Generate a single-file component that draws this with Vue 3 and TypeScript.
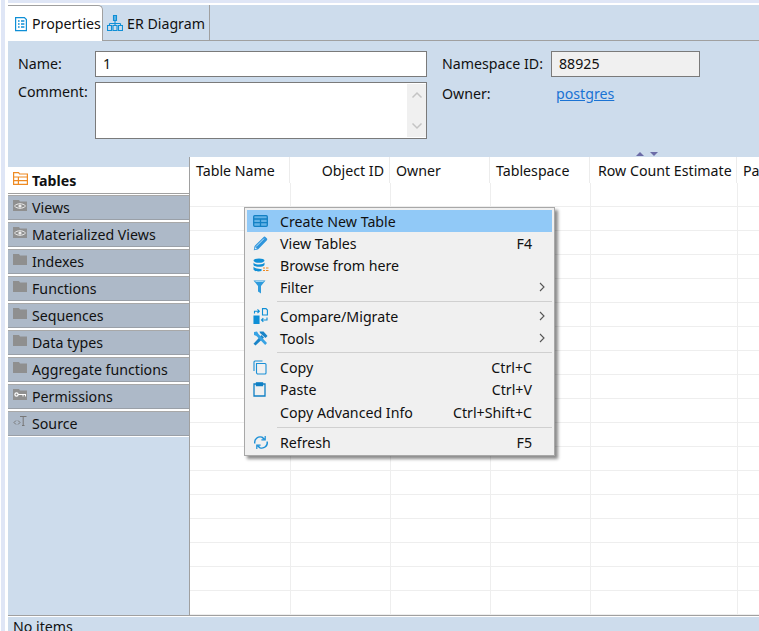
<script setup lang="ts">
interface MenuEntry { label?: string; icon?: string; key?: string; sub?: boolean; active?: boolean; sep?: boolean; spaced?: boolean }
const sideTabs = [
  { label: 'Views', icon: 'eye' },
  { label: 'Materialized Views', icon: 'eye' },
  { label: 'Indexes', icon: 'folder' },
  { label: 'Functions', icon: 'folder' },
  { label: 'Sequences', icon: 'folder' },
  { label: 'Data types', icon: 'folder' },
  { label: 'Aggregate functions', icon: 'folder' },
  { label: 'Permissions', icon: 'key' },
  { label: 'Source', icon: 'source' },
]
const columns = [
  { label: 'Table Name', w: 100 },
  { label: 'Object ID', w: 100, right: true },
  { label: 'Owner', w: 100 },
  { label: 'Tablespace', w: 100 },
  { label: 'Row Count Estimate', w: 147, wide: true },
  { label: 'Pa', w: 60 },
]
const rows = Array.from({ length: 18 }, (_, i) => i)
const menu: MenuEntry[] = [
  { label: 'Create New Table', icon: 'table', active: true },
  { label: 'View Tables', icon: 'pencil', key: 'F4' },
  { label: 'Browse from here', icon: 'db' },
  { label: 'Filter', icon: 'filter', sub: true },
  { sep: true },
  { label: 'Compare/Migrate', icon: 'compare', sub: true },
  { label: 'Tools', icon: 'tools', sub: true },
  { sep: true },
  { label: 'Copy', icon: 'copy', key: 'Ctrl+C' },
  { label: 'Paste', icon: 'paste', key: 'Ctrl+V' },
  { label: 'Copy Advanced Info', key: 'Ctrl+Shift+C', spaced: true },
  { sep: true, spaced: true },
  { label: 'Refresh', icon: 'refresh', key: 'F5' },
]
</script>

<template>
  <div class="app">
    <div class="strip"></div>
    <div class="shell">
      <div class="tabbar">
        <div class="tab active">
          <svg class="tab-icon" width="16" height="16" viewBox="0 0 16 16" fill="none" stroke="#0f8fd6" stroke-width="1.2">
            <path d="M2.6 1.6h8.8l2 2v11H2.6z" />
            <path d="M5 5h1.6M8 5h3.4M5 8h1.6M8 8h3.4M5 11h1.6M8 11h3.4" stroke-width="1.4" />
          </svg>
          <span>Properties</span>
        </div>
        <div class="tab">
          <svg class="tab-icon" width="16" height="16" viewBox="0 0 16 16" fill="none" stroke="#0f8fd6" stroke-width="1.1">
            <path d="M6.5.5h3v5h-3z" fill="#5db4e6" />
            <path d="M8 5.5v3M2.5 8.5h11M2.5 8.5v2M8 8.5v2M13.5 8.5v2" />
            <path d="M.5 10.5h4v5h-4zM6 10.5h4v5H6zM11.5 10.5h4v5h-4z" />
          </svg>
          <span>ER Diagram</span>
        </div>
      </div>

      <div class="form">
        <div class="form-left">
          <label class="lbl">Name:</label>
          <div class="input">1</div>
          <label class="lbl comment-lbl">Comment:</label>
          <div class="textarea">
            <div class="scrollbar">
              <svg width="12" height="8" viewBox="0 0 12 8" fill="none" stroke="#c4c4c4" stroke-width="1.5"><path d="M1.5 6.5 6 2l4.5 4.5" /></svg>
              <svg width="12" height="8" viewBox="0 0 12 8" fill="none" stroke="#c4c4c4" stroke-width="1.5"><path d="M1.5 1.5 6 6l4.5-4.5" /></svg>
            </div>
          </div>
        </div>
        <div class="form-right">
          <label class="lbl">Namespace ID:</label>
          <div class="input readonly">88925</div>
          <label class="lbl">Owner:</label>
          <a class="link">postgres</a>
        </div>
      </div>
      <div class="sash">
        <svg width="22" height="5" viewBox="0 0 22 5" fill="#6b6ba6"><path d="M0 5 4 1l4 4zM14 1h8l-4 4z" /></svg>
      </div>

      <div class="main">
        <div class="side">
          <div class="side-tab current">
            <svg width="15" height="13" viewBox="0 0 15 13" fill="none" stroke="#ee8a22" stroke-width="1.2">
              <path d="M.6.6h5l1 1.4h7.8v10.4H.6zM.6 5h13.8M.6 8.6h13.8M5.4 5v7.4" />
            </svg>
            <span>Tables</span>
          </div>
          <div v-for="t in sideTabs" :key="t.label" class="side-tab">
            <svg v-if="t.icon === 'folder'" width="14" height="11" viewBox="0 0 14 11" fill="#8f8f8f"><path d="M0 0h6l1 1.5h7V11H0z" /></svg>
            <svg v-else-if="t.icon === 'eye'" width="14" height="11" viewBox="0 0 14 11">
              <path d="M0 0h6l1 1.5h7V11H0z" fill="#8f8f8f" />
              <path d="M1.5 6C4 3 10 3 12.5 6 10 9 4 9 1.5 6z" fill="none" stroke="#eee" />
              <circle cx="7" cy="6" r="1.6" fill="#eee" />
            </svg>
            <svg v-else-if="t.icon === 'key'" width="14" height="11" viewBox="0 0 14 11">
              <path d="M0 0h6l1 1.5h7V11H0z" fill="#8f8f8f" />
              <circle cx="3.5" cy="5.5" r="1.6" fill="none" stroke="#fff" stroke-width="1.2" />
              <path d="M5 5.5h8M10 5.5v2M12.5 5.5v2" stroke="#fff" fill="none" />
            </svg>
            <svg v-else width="14" height="11" viewBox="0 0 14 11" fill="none" stroke="#777">
              <path d="M3 4.5 1 6.5l2 2M5 4.5l2 2-2 2M7 .5h6.5M10.2.5v9M9 9.5h2.5" />
            </svg>
            <span>{{ t.label }}</span>
          </div>
        </div>

        <div class="table">
          <div class="thead">
            <div v-for="c in columns" :key="c.label" class="th" :class="{ right: c.right, wide: c.wide }" :style="{ width: c.w + 'px' }">{{ c.label }}</div>
          </div>
          <div v-for="r in rows" :key="r" class="tr">
            <div v-for="c in columns" :key="c.label" class="td" :style="{ width: c.w + 'px' }"></div>
          </div>
        </div>
      </div>

      <div class="status">No items</div>
    </div>

    <div class="menu">
      <template v-for="(m, i) in menu" :key="i">
        <div v-if="m.sep" class="sep" :class="{ spaced: m.spaced }"></div>
        <div v-else class="item" :class="{ hot: m.active, spaced: m.spaced }">
          <span class="mi">
            <svg v-if="m.icon === 'table'" width="15" height="12" viewBox="0 0 15 12" fill="none" stroke="#1380c4" stroke-width="1.3"><rect x=".7" y=".7" width="13.6" height="10.6" rx="1" fill="#63b2e6" /><path d="M.7 4h13.6M.7 7.6h13.6M7.5 4v7.3" /></svg>
            <svg v-else-if="m.icon === 'pencil'" width="15" height="15" viewBox="0 0 15 15"><path d="M.8 14.2l1-4.4 8.6-8.6a1.6 1.6 0 0 1 2.3 0l1 1a1.6 1.6 0 0 1 0 2.3L5.2 13.2z" fill="#2f95dc" /><path d="M3 10.6 11 2.6" stroke="#bfe2f8" /><path d="M1.4 13.6l.7-3 2.3 2.3z" fill="#fff" stroke="#2f95dc" stroke-width=".7" /></svg>
            <svg v-else-if="m.icon === 'db'" width="16" height="15" viewBox="0 0 16 15"><ellipse cx="6" cy="2.6" rx="5.5" ry="2.2" fill="#0f8fd6" /><path d="M.5 4.5c1 2.6 10 2.6 11 0v2.4c-1 2.6-10 2.6-11 0zM.5 8.6c1 2.6 8 2.6 8 2.2V13c-3 .8-7 .4-8-1.4z" fill="#0f8fd6" /><path d="M10 10h2M13 10h2.5M10 12.5h2M13 12.5h2.5" stroke="#ee8a22" stroke-width="1.2" /></svg>
            <svg v-else-if="m.icon === 'filter'" width="13" height="14" viewBox="0 0 13 14"><path d="M.5.5h12L8 6v7.5L5 11.5V6z" fill="#2f9bdc" /><path d="M2.5 1.5h8" stroke="#9ed4f2" /></svg>
            <svg v-else-if="m.icon === 'compare'" width="15" height="16" viewBox="0 0 15 16" fill="none" stroke="#0f8fd6" stroke-width="1.1"><path d="M9.5.6h3.5l1.4 1.4v5H9.5z" /><path d="M1.5 5.5V3.2h4.5M4.5 1.4 6.3 3.2 4.5 5M14 9.5v2.5H8.5M10.3 10.2 8.5 12l1.8 1.8" /><path d="M1 8h5v7.4H1z" fill="#0f8fd6" /></svg>
            <svg v-else-if="m.icon === 'tools'" width="15" height="15" viewBox="0 0 15 15"><path d="M.5 12.7 8.5 4 11 6.4l-8.5 8.2z" fill="#1a84c8" /><path d="M6.5.5h4l4 4.5-2 2-5.5-5z" fill="#1a84c8" /><path d="M1 1l3-.5 1.5 2.5 8.5 9-1.8 2L3.4 5 1 4z" fill="#38a3e4" /></svg>
            <svg v-else-if="m.icon === 'copy'" width="14" height="15" viewBox="0 0 14 15" fill="none" stroke="#1a8fd6" stroke-width="1.1"><path d="M3.5 3.5H12a1 1 0 0 1 1 1V13a1 1 0 0 1-1 1H5a1.5 1.5 0 0 1-1.5-1.5z" /><path d="M1 11V2a1 1 0 0 1 1-1h7.5" /></svg>
            <svg v-else-if="m.icon === 'paste'" width="13" height="15" viewBox="0 0 13 15" fill="none" stroke="#0f7fc4" stroke-width="1.3"><path d="M3 2H1v12h11V2h-2" /><path d="M3.5 .8h6V3.5h-6z" fill="#0f7fc4" /></svg>
            <svg v-else-if="m.icon === 'refresh'" width="16" height="15" viewBox="0 0 16 15" fill="none" stroke="#1a8fd6" stroke-width="1.4"><path d="M1.8 8.5C1 4 5 1 9 2.2l2.6 2.2" /><path d="M12.2 1v3.8H8.4" stroke-width="1.2" /><path d="M14.2 6.5C15 11 11 14 7 12.8l-2.6-2.2" /><path d="M3.8 14v-3.8h3.8" stroke-width="1.2" /></svg>
          </span>
          <span class="ml">{{ m.label }}</span>
          <span class="mk">{{ m.key }}</span>
          <span class="ma">
            <svg v-if="m.sub" width="7" height="10" viewBox="0 0 7 10" fill="none" stroke="#555" stroke-width="1.1"><path d="M1 1l4 4-4 4" /></svg>
          </span>
        </div>
      </template>
    </div>
  </div>
</template>

<style>
html, body { margin: 0; background: #fff; }
</style>

<style scoped>
.app {
  position: relative;
  display: flex;
  width: 759px;
  height: 631px;
  overflow: hidden;
  background: #fff;
  font-family: "Noto Sans", "Liberation Sans", sans-serif;
  font-size: 14.2px;
  color: #111;
}
.strip {
  flex: none;
  width: 4px;
  margin: 0 3px 0 1px;
  background: #dfe6f6;
}
.shell {
  flex: 1;
  display: flex;
  flex-direction: column;
  border-top: 3px solid #dfe6f6;
  padding-top: 2px;
  min-width: 0;
}
.tabbar {
  flex: none;
  display: flex;
  height: 35px;
  background: #cddcec;
  border-bottom: 1px solid #a0a0a0;
  box-sizing: content-box;
}
.tab {
  display: flex;
  align-items: center;
  gap: 4px;
  height: 35px;
  padding: 0 0 0 4px;
  width: 107px;
  box-sizing: border-box;
  border-right: 1px solid #a0a0a0;
  white-space: nowrap;
}
.tab span { padding-top: 2px; }
.tab.active {
  width: 95px;
  padding-left: 5px;
  gap: 3px;
  height: 36px;
  background: #fff;
  border-top: 1px solid #a0a0a0;
  border-top-right-radius: 5px;
}
.tab.active span { padding-top: 0; }
.tab-icon { flex: none; }
.form {
  flex: none;
  display: flex;
  height: 106px;
  padding: 10px 0 0 10px;
  box-sizing: border-box;
  background: #cddcec;
}
.form-left {
  display: grid;
  grid-template-columns: 77px 332px;
  grid-template-rows: 26px 57px;
  row-gap: 5px;
  width: 424px;
}
.form-right {
  display: grid;
  grid-template-columns: 109px 149px;
  grid-template-rows: 26px 33px;
  align-items: center;
}
.lbl { line-height: 26px; white-space: nowrap; }
.comment-lbl { align-self: start; line-height: 20px; }
.input {
  box-sizing: border-box;
  height: 26px;
  line-height: 24px;
  padding-left: 7px;
  background: #fff;
  border: 1px solid #7a7a7a;
}
.readonly { background: #f0f0f0; }
.textarea {
  position: relative;
  box-sizing: border-box;
  height: 57px;
  background: #fff;
  border: 1px solid #7a7a7a;
}
.scrollbar {
  position: absolute;
  top: 1px;
  right: 0;
  bottom: 1px;
  width: 19px;
  background: #f0f0f0;
  display: flex;
  flex-direction: column;
  align-items: center;
  justify-content: space-between;
  padding: 7px 0;
  box-sizing: border-box;
}
.link {
  color: #1a73d4;
  text-decoration: underline;
  padding-left: 5px;
}
.sash {
  flex: none;
  height: 10px;
  line-height: 0;
  background: #cddcec;
  padding-left: 628px;
  box-sizing: border-box;
}
.sash svg { margin-top: 4px; display: block; }
.main {
  flex: 1;
  display: flex;
  min-height: 0;
}
.side {
  flex: none;
  width: 182px;
  box-sizing: border-box;
  padding-top: 10px;
  background: #cddcec;
  border-right: 1px solid #a0a0a0;
}
.side-tab {
  display: flex;
  height: 25px;
  margin-bottom: 2px;
  box-sizing: border-box;
  padding: 2px 0 0 5px;
  gap: 5px;
  background: #adb9c8;
  border-top: 1px solid #a8a8a8;
  border-bottom: 1px solid #9aa0a8;
  box-shadow: 0 1px 0 #fff, 0 -1px 0 #fff;
  line-height: 20px;
  white-space: nowrap;
}
.side-tab svg { flex: none; margin-top: 2px; }
.side-tab.current {
  height: 27px;
  margin-bottom: 1px;
  background: #fff;
  border: 0;
  border-bottom: 1px solid #a0a0a0;
  box-shadow: none;
  font-weight: 700;
  padding-top: 4px;
  gap: 4px;
}
.side-tab.current svg { margin-top: 1px; }
.table {
  flex: 1;
  background: #fff;
  overflow: hidden;
}
.thead {
  display: flex;
  height: 26px;
}
.th {
  flex: none;
  box-sizing: border-box;
  padding: 4px 5px 0 6px;
  border-right: 1px solid #ececec;
  line-height: 20px;
  white-space: nowrap;
  overflow: hidden;
}
.th.right { text-align: right; }
.th.wide { padding-left: 8px; }
.tr {
  display: flex;
  height: 24px;
  box-sizing: border-box;
  padding-left: 1px;
  border-bottom: 1px solid #eeeeee;
}
.td {
  flex: none;
  box-sizing: border-box;
  border-right: 1px solid #eeeeee;
}
.status {
  flex: none;
  height: 16px;
  box-sizing: border-box;
  border-top: 1px solid #a0a0a0;
  box-shadow: inset 0 1px 0 #fff;
  background: #cddcec;
  padding: 1px 0 0 5px;
  line-height: 20px;
  white-space: nowrap;
}
.menu {
  position: absolute;
  left: 244px;
  top: 207px;
  width: 311px;
  height: 249px;
  box-sizing: border-box;
  padding: 2px;
  background: #f0f0f0;
  border: 1px solid #a8a8a8;
  box-shadow: 3px 3px 3px rgba(0, 0, 0, 0.45);
}
.item {
  display: flex;
  align-items: center;
  height: 22px;
  white-space: nowrap;
}
.item.spaced { margin-top: 1px; }
.item.hot { background: #91c9f7; }
.mi {
  flex: none;
  width: 33px;
  padding-left: 6px;
  box-sizing: border-box;
  display: flex;
  align-items: center;
}
.ml, .mk { line-height: 24px; height: 24px; margin-top: 2px; }
.ml { flex: 1; }
.mk { flex: none; }
.ma {
  flex: none;
  width: 20px;
  display: flex;
  justify-content: center;
}
.sep {
  height: 1px;
  margin: 3px 0 3px 30px;
  background: #d0d0d0;
}
.sep.spaced { margin-top: 4px; }
</style>
